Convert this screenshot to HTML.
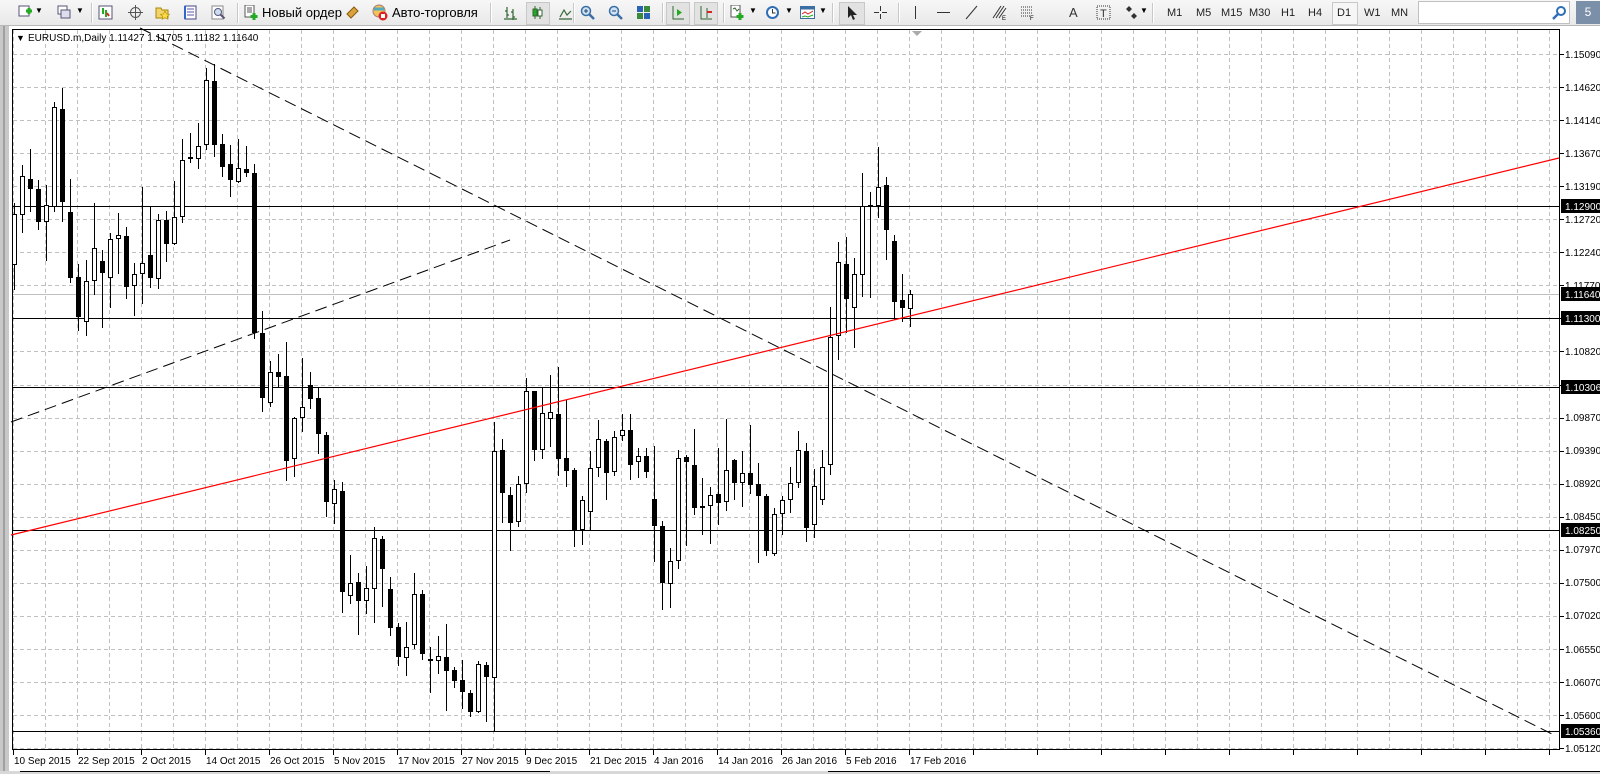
<!DOCTYPE html>
<html><head><meta charset="utf-8"><style>
html,body{margin:0;padding:0;width:1600px;height:774px;overflow:hidden;background:#f0f0f0;font-family:"Liberation Sans",Arial,sans-serif}
#tb{position:absolute;left:0;top:0;width:1600px;height:25px;background:linear-gradient(#f7f7f7,#e9e9e9);border-bottom:1px solid #b8b8b8}
.t{position:absolute;top:5px;font-size:13px;color:#000}
.sep{position:absolute;top:3px;width:1px;height:20px;background:#c8c8c8;border-right:1px solid #fff}
.ic{position:absolute;top:5px;width:15px;height:15px}
.tf{position:absolute;top:7px;font-size:11px;color:#222}
svg{position:absolute;left:0;top:0}
</style></head><body>
<div id="tb">
<svg class="ic" style="left:18px" viewBox="0 0 15 15"><rect x="1" y="1" width="10" height="10" fill="#fff" stroke="#557"/><path d="M8 6h6M11 3v6" stroke="#2a2" stroke-width="3"/></svg>
<span class="t" style="left:35px;top:6px;font-size:8px">▼</span>
<svg class="ic" style="left:57px" viewBox="0 0 15 15"><rect x="1" y="1" width="9" height="8" fill="#fff" stroke="#557"/><rect x="4" y="5" width="9" height="8" fill="#dde" stroke="#557"/></svg>
<span class="t" style="left:76px;top:6px;font-size:8px">▼</span>
<div class="sep" style="left:91px"></div>
<svg class="ic" style="left:98px" viewBox="0 0 15 15"><rect x="1" y="1" width="13" height="13" fill="#fff" stroke="#557"/><path d="M5 9V3M8 5v7" stroke="#2a2" stroke-width="2"/><path d="M9 8l2 3" stroke="#d22" stroke-width="2"/></svg>
<svg class="ic" style="left:128px" viewBox="0 0 15 15"><circle cx="7.5" cy="7.5" r="5" fill="none" stroke="#555"/><path d="M7.5 0v15M0 7.5h15" stroke="#555"/></svg>
<svg class="ic" style="left:155px" viewBox="0 0 15 15"><path d="M1 3h5l1 2h6v8H1z" fill="#f3d36b" stroke="#a80"/><path d="M10 6l1.5 3 3 .3-2.3 2 .7 3-2.9-1.6-2.9 1.6.7-3L5.5 9.3l3-.3z" fill="#fd4" stroke="#a80" stroke-width=".6"/></svg>
<svg class="ic" style="left:183px" viewBox="0 0 15 15"><rect x="2" y="1" width="11" height="13" fill="#fff" stroke="#448"/><path d="M4 4h7M4 7h7M4 10h7" stroke="#55a"/><path d="M2 1v13" stroke="#36c" stroke-width="2"/></svg>
<svg class="ic" style="left:211px" viewBox="0 0 15 15"><rect x="1" y="1" width="11" height="13" fill="#fff" stroke="#888"/><circle cx="7" cy="7" r="3.5" fill="#cde" stroke="#557"/><path d="M9.5 9.5l4 4" stroke="#557" stroke-width="2"/></svg>
<div class="sep" style="left:237px"></div>
<svg class="ic" style="left:244px" viewBox="0 0 15 15"><rect x="1" y="0" width="9" height="12" fill="#fff" stroke="#555"/><path d="M3 3h5M3 5h5M3 7h5" stroke="#555"/><path d="M10 8v7M6.5 11.5h7" stroke="#2a2" stroke-width="3"/></svg>
<span class="t" style="left:262px">Новый ордер</span>
<svg class="ic" style="left:345px" viewBox="0 0 15 15"><path d="M2 9l7-7 4 4-7 7z" fill="#d9a23a" stroke="#8a5a10"/></svg>
<svg class="ic" style="left:371px;width:17px;height:17px;top:4px" viewBox="0 0 17 17"><circle cx="8" cy="7" r="6" fill="#f2c55a" stroke="#a77"/><path d="M3 5h10" stroke="#5ab" stroke-width="3"/><circle cx="12" cy="12" r="4.5" fill="#d22"/><rect x="10" y="10" width="4" height="4" fill="#fff"/></svg>
<span class="t" style="left:392px">Авто-торговля</span>
<div class="sep" style="left:490px"></div>
<svg class="ic" style="left:503px" viewBox="0 0 15 15"><path d="M4 2v11M2 6h2M4 10h2M10 4v11M8 7h2M10 12h2M1 14h13" stroke="#363" stroke-width="1.2"/></svg>
<div style="position:absolute;left:526px;top:2px;width:22px;height:21px;background:#e2e2e2;border:1px solid #c8c8c8"></div>
<svg class="ic" style="left:530px" viewBox="0 0 15 15"><path d="M5 1v13M10 2v12" stroke="#363"/><rect x="3" y="4" width="4" height="7" fill="#2a2" stroke="#363"/><rect x="8" y="5" width="4" height="6" fill="#fff" stroke="#363"/></svg>
<svg class="ic" style="left:558px" viewBox="0 0 15 15"><path d="M1 14h13M2 12l4-7 3 5 4-4" stroke="#363" fill="none" stroke-width="1.2"/></svg>
<div class="sep" style="left:573px"></div>
<svg class="ic" style="left:580px" viewBox="0 0 15 15"><circle cx="6" cy="6" r="4.5" fill="#cfe3f7" stroke="#3a6ea5" stroke-width="1.5"/><path d="M9 9l5 5" stroke="#3a6ea5" stroke-width="2.5"/><path d="M4 6h4M6 4v4" stroke="#246"/></svg>
<svg class="ic" style="left:608px" viewBox="0 0 15 15"><circle cx="6" cy="6" r="4.5" fill="#cfe3f7" stroke="#3a6ea5" stroke-width="1.5"/><path d="M9 9l5 5" stroke="#3a6ea5" stroke-width="2.5"/><path d="M4 6h4" stroke="#246"/></svg>
<svg class="ic" style="left:636px" viewBox="0 0 15 15"><rect x="1" y="1" width="6" height="6" fill="#2a62b4"/><rect x="8" y="1" width="6" height="6" fill="#3b8a3b"/><rect x="1" y="8" width="6" height="6" fill="#3b8a3b"/><rect x="8" y="8" width="6" height="6" fill="#2a62b4"/></svg>
<div class="sep" style="left:662px"></div>
<div style="position:absolute;left:666px;top:2px;width:22px;height:21px;background:#e2e2e2;border:1px solid #c8c8c8"></div>
<svg class="ic" style="left:670px" viewBox="0 0 15 15"><path d="M3 1v13h11" stroke="#363" fill="none"/><path d="M7 4l5 3.5-5 3.5z" fill="#2a2"/></svg>
<div style="position:absolute;left:694px;top:2px;width:22px;height:21px;background:#e2e2e2;border:1px solid #c8c8c8"></div>
<svg class="ic" style="left:698px" viewBox="0 0 15 15"><path d="M3 1v13h11M9 3v10" stroke="#363" fill="none"/><path d="M9 7h5" stroke="#d22" stroke-width="2"/></svg>
<div class="sep" style="left:723px"></div>
<svg class="ic" style="left:730px" viewBox="0 0 15 15"><rect x="1" y="0" width="9" height="12" fill="#fff" stroke="#555"/><path d="M3 4l2-1 2 3 2-2" stroke="#363" fill="none"/><path d="M10 8v7M6.5 11.5h7" stroke="#2a2" stroke-width="3"/></svg>
<span class="t" style="left:749px;top:6px;font-size:8px">▼</span>
<svg class="ic" style="left:765px" viewBox="0 0 15 15"><circle cx="7.5" cy="7.5" r="6.5" fill="#2f6fb8"/><circle cx="7.5" cy="7.5" r="4.5" fill="#fff"/><path d="M7.5 4v4h3" stroke="#333" fill="none"/></svg>
<span class="t" style="left:785px;top:6px;font-size:8px">▼</span>
<svg class="ic" style="left:800px" viewBox="0 0 15 15"><rect x="0.5" y="1.5" width="14" height="12" fill="#fff" stroke="#3a6ea5"/><rect x="0.5" y="1.5" width="14" height="3" fill="#3a6ea5"/><path d="M2 9l3-2 3 2 5-3" stroke="#d22" fill="none"/><path d="M2 12l3-1 3 1 5-2" stroke="#2a2" fill="none"/></svg>
<span class="t" style="left:819px;top:6px;font-size:8px">▼</span>
<div class="sep" style="left:832px"></div>
<div style="position:absolute;left:839px;top:2px;width:24px;height:21px;background:#e2e2e2;border:1px solid #c8c8c8"></div>
<svg class="ic" style="left:844px" viewBox="0 0 15 15"><path d="M4 1v12l3-3 2 5 2-1-2-4h4z" fill="#222"/></svg>
<svg class="ic" style="left:873px" viewBox="0 0 15 15"><path d="M7.5 1v5M7.5 9v5M1 7.5h5M9 7.5h5" stroke="#333"/></svg>
<div class="sep" style="left:898px"></div>
<svg class="ic" style="left:908px" viewBox="0 0 15 15"><path d="M7.5 1v13" stroke="#333"/></svg>
<svg class="ic" style="left:936px" viewBox="0 0 15 15"><path d="M1 7.5h13" stroke="#333"/></svg>
<svg class="ic" style="left:964px" viewBox="0 0 15 15"><path d="M2 14L13 1" stroke="#333"/></svg>
<svg class="ic" style="left:992px" viewBox="0 0 15 15"><path d="M1 13L9 1M4 13L12 1M7 13L14 3" stroke="#333"/><text x="10" y="15" font-size="6" font-family="Liberation Sans">E</text></svg>
<svg class="ic" style="left:1020px" viewBox="0 0 15 15"><path d="M1 2h12M1 5h12M1 8h12M1 11h9" stroke="#333" stroke-dasharray="1 1"/><text x="10" y="15" font-size="6" font-family="Liberation Sans">F</text></svg>
<span class="t" style="left:1069px;top:5px;font-size:13px;color:#333">A</span>
<svg class="ic" style="left:1096px" viewBox="0 0 15 15"><rect x="1" y="1" width="13" height="13" fill="none" stroke="#333" stroke-dasharray="1 1"/><text x="4" y="12" font-size="11" font-family="Liberation Sans" fill="#333">T</text></svg>
<svg class="ic" style="left:1124px" viewBox="0 0 15 15"><path d="M5 1l3 3-3 3-3-3zM10 8l3 3-3 3-3-3z" fill="#333"/></svg>
<span class="t" style="left:1140px;top:6px;font-size:8px">▼</span>
<div class="sep" style="left:1152px"></div>
<span class="tf" style="left:1167px">M1</span>
<span class="tf" style="left:1196px">M5</span>
<span class="tf" style="left:1221px">M15</span>
<span class="tf" style="left:1249px">M30</span>
<span class="tf" style="left:1281px">H1</span>
<span class="tf" style="left:1308px">H4</span>
<div style="position:absolute;left:1332px;top:2px;width:24px;height:21px;background:#f6f6f6;border:1px solid #c8c8c8"></div>
<span class="tf" style="left:1337px">D1</span>
<span class="tf" style="left:1364px">W1</span>
<span class="tf" style="left:1391px">MN</span>
<div style="position:absolute;left:1418px;top:1px;width:150px;height:21px;background:#fff;border:1px solid #c0c0c0"></div>
<svg class="ic" style="left:1552px" viewBox="0 0 15 15"><circle cx="9" cy="6" r="4" fill="none" stroke="#2f6fb8" stroke-width="2"/><path d="M6 9l-5 5" stroke="#2f6fb8" stroke-width="2.5"/></svg>
<div style="position:absolute;left:1576px;top:1px;width:24px;height:23px;background:#7b8fa8;color:#fff;font-size:12px;text-align:center;line-height:22px">5</div>
</div>

<svg width="1600" height="774" style="top:0;pointer-events:none" id="ch">
<rect x="0" y="26" width="1600" height="745" fill="#fff"/>
<rect x="0" y="26" width="9" height="748" fill="#c8c8c8"/>
<rect x="3" y="26" width="2" height="748" fill="#a0a0a0"/>
<rect x="0" y="771" width="1600" height="3" fill="#d8d8d8"/>
<path d="M20 771.5h530M828 771.5h772" stroke="#000"/>
<g id="grid" stroke="#c0c0c0" stroke-dasharray="4 3"></g>
<g id="hl"></g>
<rect x="12.5" y="29.5" width="1547" height="720" fill="none" stroke="#000"/>
<path d="M912 31h10l-5 5z" fill="#aaa"/>
<g id="cd"></g>
<line x1="11" y1="535" x2="1559" y2="158" stroke="#f00" stroke-width="1.2"/>
<line x1="140" y1="28" x2="1553" y2="734.5" stroke="#000" stroke-dasharray="12 6"/>
<line x1="11" y1="422" x2="510" y2="240" stroke="#000" stroke-dasharray="12 6"/>
<text x="16" y="41" font-size="9" fill="#000">▼</text>
<text x="28" y="41" font-size="10" fill="#000" font-family="Liberation Sans">EURUSD.m,Daily  1.11427 1.11705 1.11182 1.11640</text>
<g font-size="10" font-family="Liberation Sans" fill="#000">
<text x="1565" y="58">1.15090</text><text x="1565" y="91">1.14620</text><text x="1565" y="124">1.14140</text><text x="1565" y="157">1.13670</text><text x="1565" y="190">1.13190</text><text x="1565" y="223">1.12720</text><text x="1565" y="256">1.12240</text><text x="1565" y="289">1.11770</text><text x="1565" y="355">1.10820</text><text x="1565" y="421">1.09870</text><text x="1565" y="454">1.09390</text><text x="1565" y="487">1.08920</text><text x="1565" y="520">1.08450</text><text x="1565" y="553">1.07970</text><text x="1565" y="586">1.07500</text><text x="1565" y="619">1.07020</text><text x="1565" y="653">1.06550</text><text x="1565" y="686">1.06070</text><text x="1565" y="719">1.05600</text><text x="1565" y="752">1.05120</text>
</g>
<g font-size="10" font-family="Liberation Sans">
<rect x="1561" y="199" width="39" height="14" fill="#000"/><text x="1565" y="210" fill="#fff">1.12900</text>
<rect x="1561" y="287" width="39" height="14" fill="#000"/><text x="1565" y="298" fill="#fff">1.11640</text>
<rect x="1561" y="311" width="39" height="14" fill="#000"/><text x="1565" y="322" fill="#fff">1.11300</text>
<rect x="1561" y="380" width="39" height="14" fill="#000"/><text x="1565" y="391" fill="#fff">1.10306</text>
<rect x="1561" y="523" width="39" height="14" fill="#000"/><text x="1565" y="534" fill="#fff">1.08250</text>
<rect x="1561" y="724" width="39" height="14" fill="#000"/><text x="1565" y="735" fill="#fff">1.05360</text>
</g>
<g font-size="10" font-family="Liberation Sans" fill="#000">
<text x="14" y="764">10 Sep 2015</text><text x="78" y="764">22 Sep 2015</text><text x="142" y="764">2 Oct 2015</text><text x="206" y="764">14 Oct 2015</text><text x="270" y="764">26 Oct 2015</text><text x="334" y="764">5 Nov 2015</text><text x="398" y="764">17 Nov 2015</text><text x="462" y="764">27 Nov 2015</text><text x="526" y="764">9 Dec 2015</text><text x="590" y="764">21 Dec 2015</text><text x="654" y="764">4 Jan 2016</text><text x="718" y="764">14 Jan 2016</text><text x="782" y="764">26 Jan 2016</text><text x="846" y="764">5 Feb 2016</text><text x="910" y="764">17 Feb 2016</text>
</g>
<g id="tk" stroke="#000"></g>
</svg>
<script>
var NS="http://www.w3.org/2000/svg";
function el(p,t,a){var e=document.createElementNS(NS,t);for(var k in a)e.setAttribute(k,a[k]);p.appendChild(e);return e;}
var g=document.getElementById('grid'),tk=document.getElementById('tk'),hl=document.getElementById('hl'),cd=document.getElementById('cd');
for(var x=13;x<1559;x+=32){el(g,'line',{x1:x+.5,y1:30,x2:x+.5,y2:749});}
for(var k=0;k<22;k++){var y=Math.round(54+k*33.05)+.5;el(g,'line',{x1:13,y1:y,x2:1559,y2:y});el(tk,'line',{x1:1559,y1:y,x2:1564,y2:y});}
for(var x=13;x<1559;x+=64){el(tk,'line',{x1:x+.5,y1:750,x2:x+.5,y2:755});}
[206,318,387,530,731].forEach(function(y){el(hl,'line',{x1:13,y1:y+.5,x2:1559,y2:y+.5,stroke:'#000'});});
el(hl,'line',{x1:13,y1:294.5,x2:1559,y2:294.5,stroke:'#c0c0c0'});
var D=[[214,265,203,290,1],[176,215,165,233,1],[179,189,149,212,0],[189,222,180,230,0],[205,222,185,261,1],[107,207,102,212,1],[109,202,88,222,0],[212,278,179,283,0],[277,317,264,331,0],[281,322,260,336,1],[248,281,203,295,1],[261,273,250,328,0],[239,278,233,308,1],[235,239,213,274,1],[236,287,227,299,0],[274,286,263,316,1],[263,274,187,304,1],[255,278,207,288,0],[220,279,214,289,1],[220,244,211,262,0],[217,244,181,245,1],[160,217,139,223,1],[157,159,133,163,0],[146,159,123,169,1],[80,145,68,150,1],[81,145,64,157,0],[144,167,134,177,0],[164,180,145,197,0],[168,182,139,183,1],[169,173,146,177,0],[173,333,164,339,0],[333,398,311,412,0],[372,403,361,407,1],[372,377,354,387,0],[376,461,342,481,0],[418,459,417,477,1],[407,418,358,432,1],[385,399,372,409,0],[398,434,387,454,0],[435,502,432,517,0],[489,504,480,524,1],[491,592,482,613,0],[583,596,555,604,1],[582,601,573,635,0],[588,601,566,614,1],[538,589,527,623,1],[539,569,536,607,0],[589,628,577,636,0],[627,657,623,666,0],[647,658,622,676,1],[594,645,573,649,1],[594,654,590,660,0],[659,661,647,693,0],[656,661,636,674,1],[657,671,624,711,0],[670,681,667,688,0],[680,692,660,709,0],[693,712,690,717,0],[664,712,661,713,1],[665,677,662,722,0],[451,678,422,732,1],[450,493,439,523,0],[495,523,487,551,0],[484,522,476,527,1],[391,484,378,493,1],[391,450,391,461,0],[413,450,387,459,1],[412,419,375,447,1],[414,459,367,476,0],[458,471,400,487,0],[470,530,468,547,0],[500,530,496,545,1],[468,512,451,530,1],[439,468,420,477,1],[441,473,439,500,0],[437,472,431,476,1],[430,436,414,441,1],[430,465,414,480,0],[456,462,448,478,1],[456,472,448,478,0],[499,526,446,562,0],[526,583,521,610,0],[561,584,548,608,1],[458,561,450,569,1],[457,462,455,546,0],[465,508,429,515,0],[506,508,478,535,0],[495,506,487,544,1],[494,503,448,525,0],[470,502,419,511,1],[460,483,459,500,0],[473,483,451,507,1],[473,485,425,494,0],[484,496,463,563,0],[496,551,494,556,0],[514,554,508,556,1],[500,514,496,535,1],[483,500,467,513,1],[450,483,431,488,1],[451,528,443,542,0],[486,525,469,538,1],[467,500,450,505,1],[337,465,307,475,1],[262,336,242,360,1],[264,299,237,333,0],[274,308,258,348,1],[206,275,173,297,1],[205,207,192,298,0],[187,206,147,218,1],[185,230,177,260,0],[241,302,235,320,0],[300,308,274,322,0],[294,309,290,327,1]];
D.forEach(function(c,i){var x=14+8*i;if(x<13)return;
el(cd,'line',{x1:x+.5,y1:Math.max(c[2],30),x2:x+.5,y2:c[3],stroke:'#000'});
var h=Math.max(c[1]-c[0],1);
if(c[4])el(cd,'rect',{x:x-1.5,y:c[0]+.5,width:4,height:Math.max(h-1,1),fill:'#fff',stroke:'#000'});
else el(cd,'rect',{x:x-2,y:c[0],width:5,height:Math.max(h,2),fill:'#000'});});
</script>
</body></html>
